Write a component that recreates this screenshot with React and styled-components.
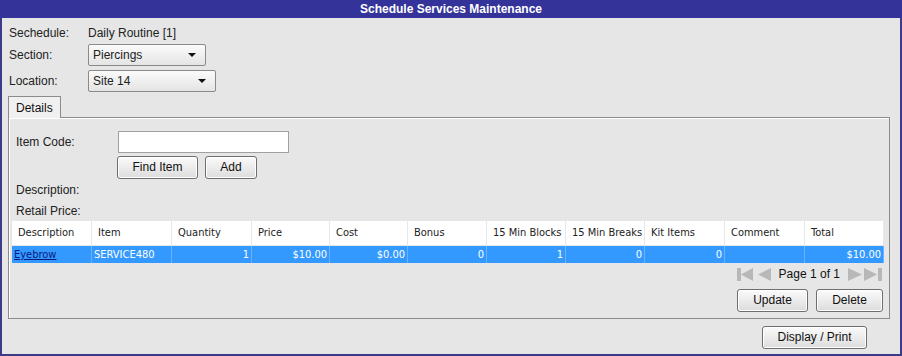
import React from 'react'
import styled, { createGlobalStyle } from 'styled-components'

const GlobalStyle = createGlobalStyle`
  body {
    margin: 0;
    background: #ffffff;
    font-family: "Liberation Sans", Arial, sans-serif;
  }
`

const Frame = styled.div`
  width: 902px;
  height: 356px;
  box-sizing: border-box;
  border: 2px solid #3b3b8a;
  border-top: none;
  background: #e6e6e6;
  display: flex;
  flex-direction: column;
`

const TitleBar = styled.div`
  height: 18px;
  margin: 0 -2px;
  background: #333399;
  color: #ffffff;
  font-weight: bold;
  font-size: 12px;
  line-height: 18px;
  text-align: center;
`

const Body = styled.div`
  padding: 6px 10px 0 4px;
  display: flex;
  flex-direction: column;
`

const FormRow = styled.div`
  display: flex;
  align-items: center;
  height: ${p => p.h || 22}px;
  margin-bottom: ${p => p.mb || 0}px;
  font-size: 12px;
  color: #222;
`

const Label = styled.div`
  box-sizing: border-box;
  width: ${p => p.w || 82}px;
  padding-left: ${p => p.pl || 3}px;
`

const Select = styled.div`
  width: ${p => p.w}px;
  height: 22px;
  box-sizing: border-box;
  border: 1px solid #8a8a8a;
  border-radius: 2px;
  background: linear-gradient(#fbfbfb, #e4e4e4);
  display: flex;
  align-items: center;
  justify-content: space-between;
  padding: 0 9px 0 4px;
  font-size: 12px;
`

const Caret = styled.span`
  width: 0;
  height: 0;
  border-left: 4px solid transparent;
  border-right: 4px solid transparent;
  border-top: 4px solid #111;
`

const TabStrip = styled.div`
  display: flex;
  margin-top: 3px;
  margin-left: 2px;
`

const Tab = styled.div`
  height: 22px;
  padding: 0 7px;
  box-sizing: border-box;
  border: 1px solid #8c8c8c;
  border-bottom: none;
  background: #f0f0f0;
  font-size: 12px;
  line-height: 22px;
  color: #111;
  position: relative;
  top: 1px;
`

const Panel = styled.div`
  margin-left: 2px;
  height: 202px;
  box-sizing: border-box;
  border: 1px solid #8c8c8c;
  box-shadow: inset 1px 1px 0 #ffffff;
  padding: 13px 5px 0 3px;
  display: flex;
  flex-direction: column;
`

const TextInput = styled.div`
  width: 171px;
  height: 22px;
  box-sizing: border-box;
  border: 1px solid #a0a0a0;
  background: #ffffff;
`

const ButtonRow = styled.div`
  display: flex;
  gap: ${p => p.gap || 7}px;
  justify-content: ${p => p.justify || 'flex-start'};
  padding-left: ${p => p.pl || 0}px;
  padding-right: ${p => p.pr || 0}px;
  margin-top: ${p => p.mt || 0}px;
`

const Button = styled.div`
  width: ${p => p.w}px;
  height: 23px;
  box-sizing: border-box;
  border: 1px solid #6e6e6e;
  border-radius: 3px;
  background: linear-gradient(#fbfbfb, #dcdcdc);
  box-shadow: inset 0 0 0 1px #ffffff;
  font-size: 12px;
  line-height: 21px;
  text-align: center;
  color: #111;
`

const Grid = styled.div`
  width: 872px;
  font-family: "DejaVu Sans Condensed", "DejaVu Sans", sans-serif;
  font-size: 11px;
`

const GridRow = styled.div`
  display: grid;
  grid-template-columns: 80px 80px 80px 78px 78px 79px 79px 79px 80px 80px 79px;
  height: ${p => p.h}px;
  background: ${p => p.selected ? '#3399ff' : '#ffffff'};
  color: ${p => p.selected ? '#ffffff' : '#222'};
  margin-top: ${p => p.mt || 0}px;
`

const Cell = styled.div`
  box-sizing: border-box;
  padding: 0 ${p => p.selected ? 2 : 5}px 0 ${p => p.selected ? 2 : 6}px;
  border-right: 1px solid ${p => p.selected ? '#66b3ff' : '#e8e8e8'};
  line-height: ${p => p.h}px;
  text-align: ${p => p.align || 'left'};
  white-space: nowrap;
  overflow: hidden;
`

const LinkText = styled.span`
  color: #0a1a80;
  text-decoration: underline;
`

const Pager = styled.div`
  display: flex;
  align-items: center;
  justify-content: flex-end;
  height: 20px;
  margin-top: 1px;
  padding-right: 2px;
  font-size: 12px;
  color: #111;
`

const PagerText = styled.span`
  margin: 0 8px;
`

const PagerIcon = styled.svg`
  margin-left: ${p => p.ml || 0}px;
  fill: #b8b8b8;
`

const Footer = styled.div`
  display: flex;
  justify-content: flex-end;
  padding-right: 23px;
  margin-top: 7px;
`

const columns = ['Description', 'Item', 'Quantity', 'Price', 'Cost', 'Bonus', '15 Min Blocks', '15 Min Breaks', 'Kit Items', 'Comment', 'Total']
const row = [
  { v: 'Eyebrow', link: true },
  { v: 'SERVICE480' },
  { v: '1', align: 'right' },
  { v: '$10.00', align: 'right' },
  { v: '$0.00', align: 'right' },
  { v: '0', align: 'right' },
  { v: '1', align: 'right' },
  { v: '0', align: 'right' },
  { v: '0', align: 'right' },
  { v: '' },
  { v: '$10.00', align: 'right' }
]

export default function App () {
  return <>
    <GlobalStyle />
    <Frame>
      <TitleBar>Schedule Services Maintenance</TitleBar>
      <Body>
        <FormRow h={18} mb={2}>
          <Label>Sechedule:</Label>
          <span>Daily Routine [1]</span>
        </FormRow>
        <FormRow mb={4}>
          <Label>Section:</Label>
          <Select w={118}>Piercings<Caret /></Select>
        </FormRow>
        <FormRow>
          <Label>Location:</Label>
          <Select w={128}>Site 14<Caret /></Select>
        </FormRow>
        <TabStrip><Tab>Details</Tab></TabStrip>
        <Panel>
          <FormRow>
            <Label w={106} pl={4}>Item Code:</Label>
            <TextInput />
          </FormRow>
          <ButtonRow pl={105} mt={3}>
            <Button w={81}>Find Item</Button>
            <Button w={52}>Add</Button>
          </ButtonRow>
          <FormRow h={21}>
            <Label pl={4} w={200}>Description:</Label>
          </FormRow>
          <FormRow h={21}>
            <Label pl={4} w={200}>Retail Price:</Label>
          </FormRow>
          <Grid>
            <GridRow h={24}>
              {columns.map(c => <Cell key={c} h={24}>{c}</Cell>)}
            </GridRow>
            <GridRow h={17} mt={1} selected>
              {row.map((c, i) => <Cell key={i} h={17} selected align={c.align}>
                {c.link ? <LinkText>{c.v}</LinkText> : c.v}
              </Cell>)}
            </GridRow>
          </Grid>
          <Pager>
            <PagerIcon width='17' height='15' viewBox='0 0 17 15'>
              <rect x='0' y='1' width='4' height='13' />
              <polygon points='16,1 4,7.5 16,14' />
            </PagerIcon>
            <PagerIcon ml={4} width='13' height='15' viewBox='0 0 13 15'>
              <polygon points='13,1 0,7.5 13,14' />
            </PagerIcon>
            <PagerText>Page 1 of 1</PagerText>
            <PagerIcon width='14' height='15' viewBox='0 0 14 15'>
              <polygon points='0,1 14,7.5 0,14' />
            </PagerIcon>
            <PagerIcon ml={2} width='18' height='15' viewBox='0 0 18 15'>
              <polygon points='0,1 13,7.5 0,14' />
              <rect x='14' y='1' width='4' height='13' />
            </PagerIcon>
          </Pager>
          <ButtonRow justify='flex-end' pr={1} mt={5} gap={8}>
            <Button w={71}>Update</Button>
            <Button w={67}>Delete</Button>
          </ButtonRow>
        </Panel>
        <Footer>
          <Button w={105}>Display / Print</Button>
        </Footer>
      </Body>
    </Frame>
  </>
}
